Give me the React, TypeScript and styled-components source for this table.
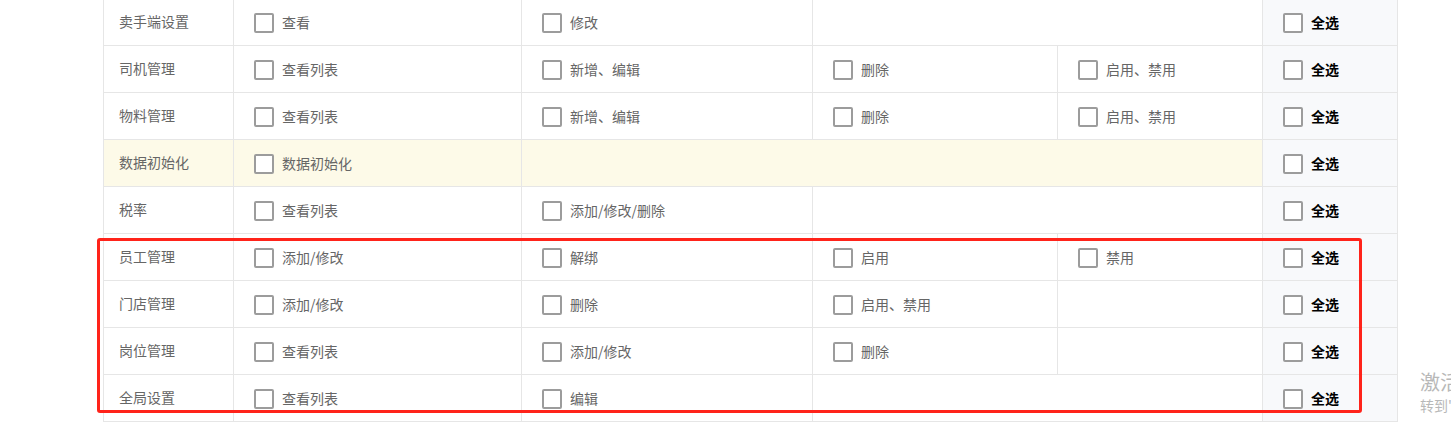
import React from "react";
import styled, { createGlobalStyle } from "styled-components";

const GlobalStyle = createGlobalStyle`
  html, body {
    margin: 0;
    padding: 0;
    background: #ffffff;
    overflow: hidden;
    font-family: "Noto Sans CJK SC", "Microsoft YaHei", sans-serif;
  }
`;

const Page = styled.div`
  position: relative;
  width: 1451px;
  height: 430px;
  padding-left: 103px;
  box-sizing: border-box;
  overflow: hidden;
`;

const Table = styled.table`
  margin-top: -2px;
  border-collapse: collapse;
  table-layout: fixed;
  width: 1294px;
  font-size: 14px;
  line-height: 20px;
`;

const Row = styled.tr<{ $tone?: "yellow" }>`
  background: ${(p) => (p.$tone === "yellow" ? "#fdfae8" : "#ffffff")};
`;

const Cell = styled.td`
  border: 1px solid #e6e6e6;
  height: 47px;
  padding: 0 0 0 20px;
  box-sizing: border-box;
  vertical-align: middle;
`;

const NameCell = styled(Cell)`
  padding-left: 15px;
  padding-bottom: 2px;
  color: #666666;
`;

const AllCell = styled(Cell)`
  background: #f8f9fb;
`;

const Option = styled.label`
  display: inline-flex;
  align-items: center;
  gap: 8px;
  color: #666666;
  line-height: 20px;
  vertical-align: middle;
`;

const Label = styled.span`
  margin-top: -2px;
`;

const Box = styled.span`
  display: inline-block;
  width: 20px;
  height: 20px;
  box-sizing: border-box;
  border: 2px solid #9c9c9c;
  border-radius: 2px;
  background: #ffffff;
`;

const AllText = styled(Label)`
  color: #000000;
  font-weight: bold;
`;

const Highlight = styled.div`
  position: absolute;
  left: 97px;
  top: 238px;
  width: 1265px;
  height: 175px;
  box-sizing: border-box;
  border: 3px solid #ff231a;
  border-radius: 3px;
  pointer-events: none;
`;

const Watermark = styled.div`
  position: absolute;
  left: 1420px;
  top: 369px;
  color: #b8b8b8;
  white-space: nowrap;
`;

const WmTitle = styled.div`
  font-size: 20px;
  line-height: 26px;
`;

const WmSub = styled.div`
  font-size: 14px;
  line-height: 20px;
`;

type Cellv = string | null | { span: number };

interface RowData {
  name: string;
  cells: Cellv[];
  tone?: "yellow";
}

const rows: RowData[] = [
  { name: "卖手端设置", cells: ["查看", "修改", { span: 2 }] },
  { name: "司机管理", cells: ["查看列表", "新增、编辑", "删除", "启用、禁用"] },
  { name: "物料管理", cells: ["查看列表", "新增、编辑", "删除", "启用、禁用"] },
  { name: "数据初始化", cells: ["数据初始化", { span: 3 }], tone: "yellow" },
  { name: "税率", cells: ["查看列表", "添加/修改/删除", { span: 2 }] },
  { name: "员工管理", cells: ["添加/修改", "解绑", "启用", "禁用"] },
  { name: "门店管理", cells: ["添加/修改", "删除", "启用、禁用", null] },
  { name: "岗位管理", cells: ["查看列表", "添加/修改", "删除", null] },
  { name: "全局设置", cells: ["查看列表", "编辑", { span: 2 }] },
];

const Check: React.FC<{ text: string }> = ({ text }) => (
  <Option>
    <Box />
    <Label>{text}</Label>
  </Option>
);

export default function App() {
  return (
    <>
      <GlobalStyle />
      <Page>
        <Table>
          <colgroup>
            <col style={{ width: 130 }} />
            <col style={{ width: 288 }} />
            <col style={{ width: 291 }} />
            <col style={{ width: 245 }} />
            <col style={{ width: 205 }} />
            <col style={{ width: 135 }} />
          </colgroup>
          <tbody>
            {rows.map((r) => (
              <Row key={r.name} $tone={r.tone}>
                <NameCell>{r.name}</NameCell>
                {r.cells.map((c, i) => {
                  if (c === null) return <Cell key={i} />;
                  if (typeof c === "string")
                    return (
                      <Cell key={i}>
                        <Check text={c} />
                      </Cell>
                    );
                  return <Cell key={i} colSpan={c.span} />;
                })}
                <AllCell>
                  <Option>
                    <Box />
                    <AllText>全选</AllText>
                  </Option>
                </AllCell>
              </Row>
            ))}
          </tbody>
        </Table>
        <Highlight />
        <Watermark>
          <WmTitle>激活 Windows</WmTitle>
          <WmSub>转到"设置"以激活 Windows。</WmSub>
        </Watermark>
      </Page>
    </>
  );
}
